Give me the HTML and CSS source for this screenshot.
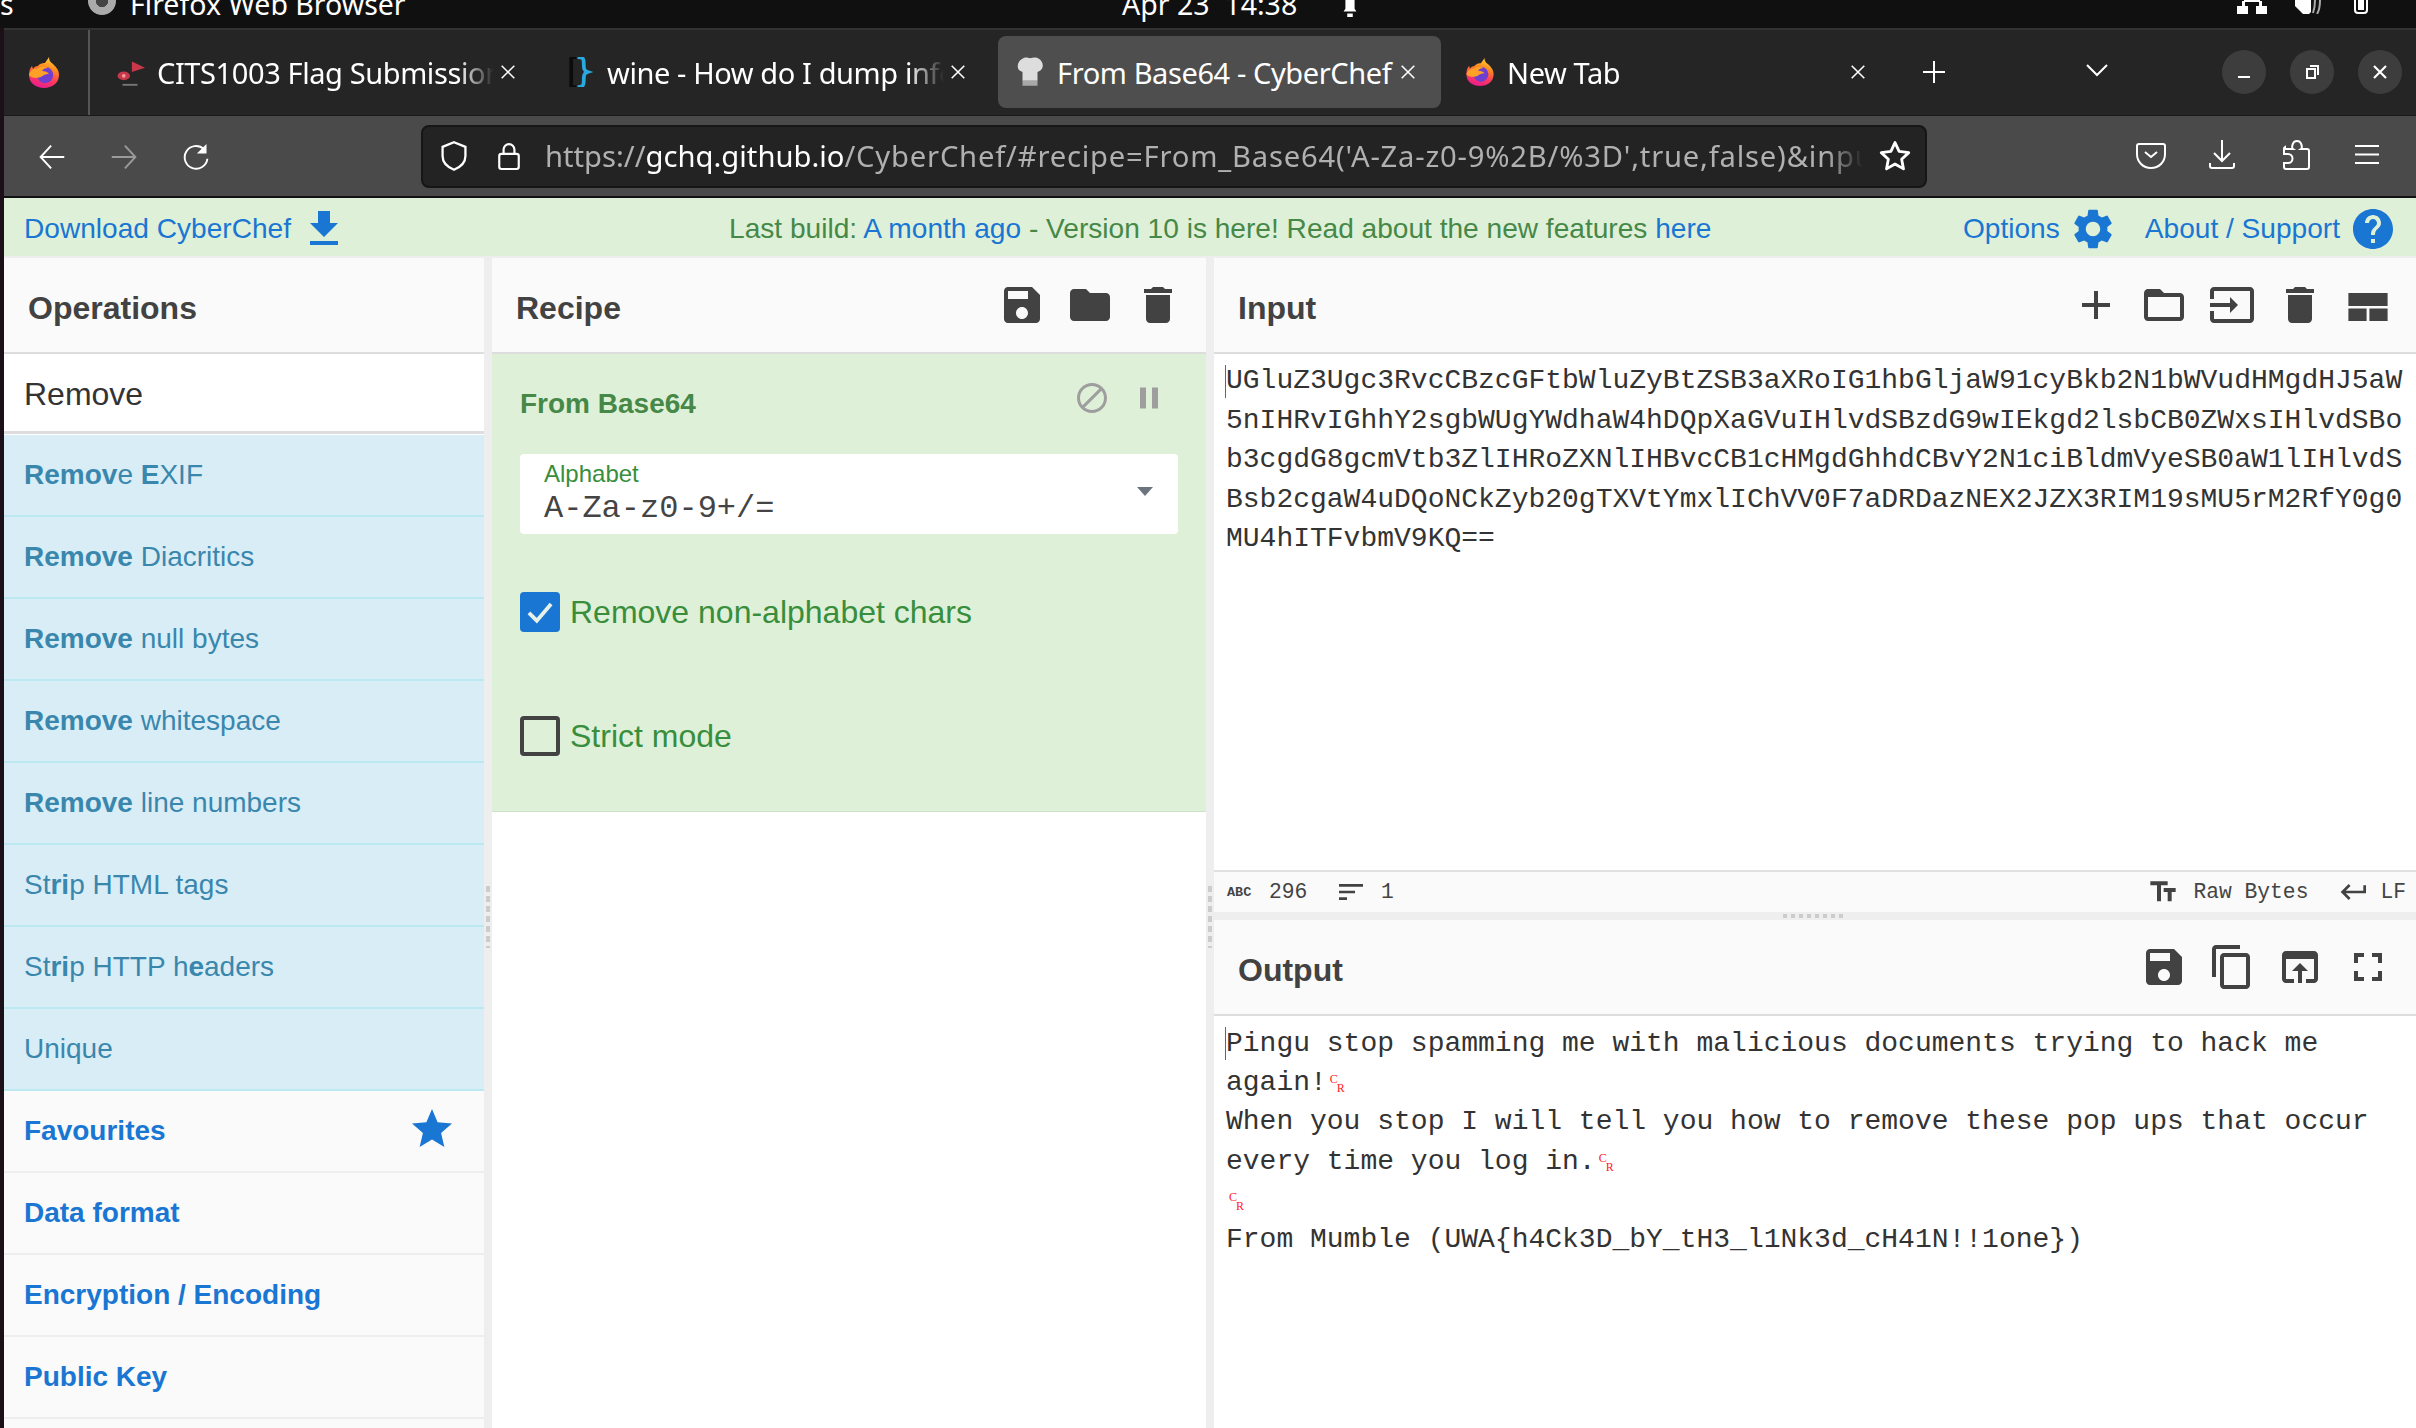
FILE: index.html
```html
<!DOCTYPE html>
<html lang="en">
<head>
<meta charset="utf-8">
<title>From Base64 - CyberChef</title>
<link rel="stylesheet" href="styles.css">
</head>
<body>
<svg class="sprite" xmlns="http://www.w3.org/2000/svg">
  <defs>
    <linearGradient id="fox-body" x1="0.700" y1="0" x2="0.400" y2="1">
      <stop offset="0" stop-color="#ffd43a"/>
      <stop offset="0.350" stop-color="#ff8a1e"/>
      <stop offset="0.700" stop-color="#ff3a5e"/>
      <stop offset="1" stop-color="#e81c8f"/>
    </linearGradient>
    <symbol id="i-save" viewBox="0 0 24 24"><path d="M17 3H5c-1.11 0-2 .9-2 2v14c0 1.1.89 2 2 2h14c1.1 0 2-.9 2-2V7l-4-4zm-5 16c-1.66 0-3-1.34-3-3s1.34-3 3-3 3 1.34 3 3-1.34 3-3 3zm3-10H5V5h10v4z"/></symbol>
    <symbol id="i-folder" viewBox="0 0 24 24"><path d="M10 4H4c-1.1 0-1.99.9-1.99 2L2 18c0 1.1.9 2 2 2h16c1.1 0 2-.9 2-2V8c0-1.1-.9-2-2-2h-8l-2-2z"/></symbol>
    <symbol id="i-folder-o" viewBox="0 0 24 24"><path d="M20 6h-8l-2-2H4c-1.1 0-1.99.9-1.99 2L2 18c0 1.1.9 2 2 2h16c1.1 0 2-.9 2-2V8c0-1.1-.9-2-2-2zm0 12H4V8h16v10z"/></symbol>
    <symbol id="i-trash" viewBox="0 0 24 24"><path d="M6 19c0 1.1.9 2 2 2h8c1.1 0 2-.9 2-2V7H6v12zM19 4h-3.5l-1-1h-5l-1 1H5v2h14V4z"/></symbol>
    <symbol id="i-add" viewBox="0 0 24 24"><path d="M19 13h-6v6h-2v-6H5v-2h6V5h2v6h6v2z"/></symbol>
    <symbol id="i-input" viewBox="0 0 24 24"><path d="M21 3.01H3c-1.1 0-2 .9-2 2V9h2V4.99h18v14.03H3V15H1v4.01c0 1.1.9 1.98 2 1.98h18c1.1 0 2-.88 2-1.98v-14c0-1.11-.9-2-2-2zM11 16l4-4-4-4v3H1v2h10v3z"/></symbol>
    <symbol id="i-layout" viewBox="0 0 24 24"><path d="M2.200 6h19.600v6.500H2.200zM2.200 13.800h9.100V20H2.200zM12.700 13.800h9.100V20h-9.100z"/></symbol>
    <symbol id="i-copy" viewBox="0 0 24 24"><path d="M16 1H4c-1.1 0-2 .9-2 2v14h2V3h12V1zm3 4H8c-1.1 0-2 .9-2 2v14c0 1.1.9 2 2 2h11c1.1 0 2-.9 2-2V7c0-1.1-.9-2-2-2zm0 16H8V7h11v14z"/></symbol>
    <symbol id="i-open" viewBox="0 0 24 24"><path d="M19 4H5c-1.11 0-2 .9-2 2v12c0 1.1.89 2 2 2h4v-2H5V8h14v10h-4v2h4c1.1 0 2-.9 2-2V6c0-1.1-.89-2-2-2zm-7 6l-4 4h3v6h2v-6h3l-4-4z"/></symbol>
    <symbol id="i-full" viewBox="0 0 24 24"><path d="M7 14H5v5h5v-2H7v-3zm-2-4h2V7h3V5H5v5zm12 7h-3v2h5v-5h-2v3zM14 5v2h3v3h2V5h-5z"/></symbol>
    <symbol id="i-down" viewBox="0 0 24 24"><path d="M19 9h-4V3H9v6H5l7 7 7-7zM5 18v2h14v-2H5z"/></symbol>
    <symbol id="i-gear" viewBox="0 0 24 24"><path d="M19.14 12.94c.04-.3.06-.61.06-.94 0-.32-.02-.64-.07-.94l2.03-1.58c.18-.14.23-.41.12-.61l-1.92-3.32c-.12-.22-.37-.29-.59-.22l-2.39.96c-.5-.38-1.03-.7-1.62-.94l-.36-2.54c-.04-.24-.24-.41-.48-.41h-3.84c-.24 0-.43.17-.47.41l-.36 2.54c-.59.24-1.13.57-1.62.94l-2.39-.96c-.22-.08-.47 0-.59.22L2.74 8.87c-.12.21-.08.47.12.61l2.03 1.58c-.05.3-.09.63-.09.94s.02.64.07.94l-2.03 1.58c-.18.14-.23.41-.12.61l1.92 3.32c.12.22.37.29.59.22l2.39-.96c.5.38 1.03.7 1.62.94l.36 2.54c.05.24.24.41.48.41h3.84c.24 0 .44-.17.47-.41l.36-2.54c.59-.24 1.13-.56 1.62-.94l2.39.96c.22.08.47 0 .59-.22l1.92-3.32c.12-.22.07-.47-.12-.61l-2.01-1.58zM12 15.6c-1.98 0-3.6-1.62-3.6-3.6s1.62-3.6 3.6-3.6 3.6 1.62 3.6 3.6-1.62 3.6-3.6 3.6z"/></symbol>
    <symbol id="i-help" viewBox="0 0 24 24"><path d="M12 2C6.48 2 2 6.48 2 12s4.48 10 10 10 10-4.48 10-10S17.52 2 12 2zm1 17h-2v-2h2v2zm2.07-7.75l-.9.92C13.45 12.9 13 13.5 13 15h-2v-.5c0-1.1.45-2.1 1.17-2.83l1.24-1.26c.37-.36.59-.86.59-1.41 0-1.1-.9-2-2-2s-2 .9-2 2H8c0-2.21 1.79-4 4-4s4 1.79 4 4c0 .88-.36 1.68-.93 2.25z"/></symbol>
    <symbol id="i-star" viewBox="0 0 24 24"><path d="M12 17.27L18.18 21l-1.64-7.03L22 9.24l-7.19-.61L12 2 9.19 8.63 2 9.24l5.46 4.73L5.82 21z"/></symbol>
    <symbol id="i-block" viewBox="0 0 24 24"><path d="M12 2C6.48 2 2 6.48 2 12s4.48 10 10 10 10-4.48 10-10S17.52 2 12 2zM4 12c0-4.42 3.58-8 8-8 1.85 0 3.55.63 4.9 1.69L5.69 16.9C4.63 15.55 4 13.85 4 12zm8 8c-1.85 0-3.55-.63-4.9-1.69L18.31 7.1C19.37 8.45 20 10.15 20 12c0 4.42-3.58 8-8 8z"/></symbol>
    <symbol id="i-pause" viewBox="0 0 24 24"><path d="M6 19h4V5H6v14zm8-14v14h4V5h-4z"/></symbol>
    <symbol id="i-tt" viewBox="0 0 24 24"><path d="M2.5 4v3h5v12h3V7h5V4h-13zm19 5h-9v3h3v7h3v-7h3V9z"/></symbol>
    <symbol id="i-ret" viewBox="0 0 24 24"><path d="M19 7v4H5.83l3.58-3.59L8 6l-6 6 6 6 1.41-1.41L5.83 13H21V7z"/></symbol>
    <symbol id="i-sort" viewBox="0 0 24 24"><path d="M3 18h6v-2H3v2zM3 6v2h18V6H3zm0 7h12v-2H3v2z"/></symbol>
    <symbol id="i-x" viewBox="0 0 20 20"><path fill="none" stroke="#fff" stroke-width="1.700" d="M3 3l14 14M17 3L3 17"/></symbol>
    <symbol id="i-fox" viewBox="0 0 32 33">
      <path fill="url(#fox-body)" d="M21 1c0 3 1 5 4 7 3 3 6 6 6 11 0 8-7 13-15 13S1 27 1 19c0-4 1-7 3-9l1 3c1-2 3-3 5-3 2-3 6-3 7-3 1-2 3-4 4-6z"/>
      <circle cx="17" cy="19" r="8.200" fill="#6f3fd0"/>
      <path fill="#ffa126" d="M1 19c1-4 4-7 8-6 3-3 8-3 11-1-3 0-5 1-6 3 3 0 6 1 7 3-4 0-5 1-8 3-3 1-9 2-12-2z"/>
    </symbol>
  </defs>
</svg>

<header class="topbar">
  <span class="top-s">s</span>
  <span class="top-app-icon"></span>
  <span class="top-app">Firefox Web Browser</span>
  <span class="top-clock">Apr 23&nbsp;&nbsp;14:38</span>
  <svg class="top-bell" viewBox="0 0 24 24"><path fill="#fff" d="M12 -2c-3 0-5 2-5 6v10l-2 3h14l-2-3V4c0-4-2-6-5-6zM9 19h6v4H9z"/></svg>
  <span class="top-tray">
    <svg class="tray-net" viewBox="0 0 32 14"><path fill="#fff" d="M8 0h16v2H8zM6 1h3v5H6zM23 1h3v5h-3zM1 6h11v8H1zM20 6h11v8H20z"/></svg>
    <svg class="tray-vol" viewBox="0 0 28 14"><path fill="#fff" d="M0 0h16v12l-2 2H8L0 6z"/><path fill="none" stroke="#aaa" stroke-width="2" d="M20 0c0 6-1 10-2 13M25 0c0 6-1 11-3 14"/></svg>
    <svg class="tray-bat" viewBox="0 0 14 14"><path fill="none" stroke="#fff" stroke-width="2" d="M1 0v10a3 3 0 0 0 3 3h6a3 3 0 0 0 3-3V0"/><path fill="#fff" d="M4 0h6v10H4z"/></svg>
  </span>
</header>

<div class="window">
  <nav class="tabs">
    <div class="tab-logo"><svg class="fox"><use href="#i-fox"/></svg></div>
    <div class="tab">
      <svg class="favicon" viewBox="0 0 24 24"><path fill="#c8384a" d="M13.500 3.500L24 8.500 13.500 12z"/><ellipse cx="7" cy="15" rx="5" ry="3.500" fill="#c8384a"/><circle cx="7" cy="15" r="1.500" fill="#ee9aa0"/><path fill="#777" d="M6 21.500h12v1.500H6z"/></svg>
      <span class="tab-title">CITS1003 Flag Submission</span>
      <svg class="tab-close"><use href="#i-x"/></svg>
    </div>
    <div class="tab">
      <svg class="favicon" viewBox="0 0 24 24"><path fill="none" stroke="#0c0c0c" stroke-width="3" d="M9 0H5v24h4"/><path fill="none" stroke="#2aa8e0" stroke-width="3" d="M10 0c5 0 5 2 5 5 0 4 0 6 3 7-3 1-3 3-3 7 0 3 0 5-5 5"/></svg>
      <span class="tab-title">wine - How do I dump info</span>
      <svg class="tab-close"><use href="#i-x"/></svg>
    </div>
    <div class="tab tab-active">
      <svg class="favicon favicon-hat" viewBox="0 0 24 24"><path fill="#ddd" d="M5 2c2-2 5-2 7-1 3-1 6-1 8 1 3 3 3 7 0 9l-2 1v7H6v-7l-2-1C1 9 2 4 5 2z"/><path fill="#a8a8a8" d="M6 19h12v4H6z"/></svg>
      <span class="tab-title">From Base64 - CyberChef</span>
      <svg class="tab-close"><use href="#i-x"/></svg>
    </div>
    <div class="tab">
      <svg class="favicon"><use href="#i-fox"/></svg>
      <span class="tab-title">New Tab</span>
      <svg class="tab-close"><use href="#i-x"/></svg>
    </div>
    <svg class="tab-new" viewBox="0 0 24 24"><path fill="none" stroke="#fff" stroke-width="2" d="M12 1v22M1 12h22"/></svg>
    <svg class="tab-list" viewBox="0 0 24 24"><path fill="none" stroke="#fff" stroke-width="2" d="M2 7l10 10L22 7"/></svg>
    <div class="winbtns">
      <span class="winbtn"><svg viewBox="0 0 24 24"><path fill="#fff" d="M6 16h12v2H6z"/></svg></span>
      <span class="winbtn"><svg viewBox="0 0 24 24"><path fill="none" stroke="#fff" stroke-width="2" d="M7 9h8v9H7zM10 6h8v9"/></svg></span>
      <span class="winbtn"><svg viewBox="0 0 24 24"><path fill="none" stroke="#fff" stroke-width="2.200" d="M6 6l12 12M18 6L6 18"/></svg></span>
    </div>
  </nav>

  <div class="toolbar">
    <div class="nav-icons">
      <svg class="nav-icon" viewBox="0 0 32 32"><path fill="none" stroke="#fff" stroke-width="2.200" d="M30 16H3M15 3L3 16l12 13"/></svg>
      <svg class="nav-icon nav-off" viewBox="0 0 32 32"><path fill="none" stroke="#9a9a9a" stroke-width="2.200" d="M2 16h27M17 3l12 13-12 13"/></svg>
      <svg class="nav-icon" viewBox="0 0 32 32"><path fill="none" stroke="#fff" stroke-width="2.200" d="M25 7a13 13 0 1 0 4 11"/><path fill="#fff" d="M28 1v11H17z"/></svg>
    </div>
    <div class="urlbar">
      <svg class="url-shield" viewBox="0 0 24 28"><path fill="none" stroke="#fff" stroke-width="2" d="M12 2l10 4v8c0 6-5 10-10 12C7 24 2 20 2 14V6z"/></svg>
      <svg class="url-lock" viewBox="0 0 24 28"><path fill="none" stroke="#fff" stroke-width="2" d="M5 12h14a2 2 0 0 1 2 2v10a2 2 0 0 1-2 2H5a2 2 0 0 1-2-2V14a2 2 0 0 1 2-2zM7 12V8a5 5 0 0 1 10 0v4"/></svg>
      <span class="url-text">https://<b class="url-host">gchq.github.io</b><span class="url-rest">/CyberChef/#recipe=From_Base64('A-Za-z0-9%2B/%3D',true,false)&amp;input=UGluZ3Ug</span></span>
      <svg class="url-star" viewBox="0 0 24 24"><path fill="none" stroke="#fff" stroke-width="2" stroke-linejoin="round" d="M12 2.500l2.900 6.300 6.800.8-5 4.700 1.300 6.800-6-3.400-6 3.400 1.300-6.800-5-4.700 6.800-.8z"/></svg>
    </div>
    <div class="tool-icons">
      <svg class="tool-icon" viewBox="0 0 32 34"><path fill="none" stroke="#fff" stroke-width="2" d="M4 5h24a2 2 0 0 1 2 2v8c0 8-6 14-14 14S2 23 2 15V7a2 2 0 0 1 2-2z"/><path fill="none" stroke="#fff" stroke-width="2" d="M10 13l6 5 6-5"/></svg>
      <svg class="tool-icon" viewBox="0 0 32 34"><path fill="none" stroke="#fff" stroke-width="2" d="M15 1v21M7 14l8 8 8-8M3 24v3a2 2 0 0 0 2 2h20a2 2 0 0 0 2-2v-3"/></svg>
      <svg class="tool-icon" viewBox="0 0 32 34"><path fill="none" stroke="#fff" stroke-width="2" d="M6 10h8c-1.500-1-1-8 4-8s5.500 7 4 8h6a2 2 0 0 1 2 2v16a2 2 0 0 1-2 2H7a2 2 0 0 1-2-2v-4h4a4 4 0 0 0 0-9H5v-5a2 2 0 0 1 1-2z"/></svg>
      <svg class="tool-icon" viewBox="0 0 32 34"><path fill="none" stroke="#fff" stroke-width="2" d="M4 7h24M4 15.500h24M4 24h24"/></svg>
    </div>
  </div>

  <div class="banner">
    <div class="banner-side">
      <a class="blue">Download CyberChef</a>
      <svg class="ic48 ic-blue"><use href="#i-down"/></svg>
    </div>
    <div class="banner-msg">Last build: <span class="blue">A month ago</span> - Version 10 is here! Read about the new features <span class="blue">here</span></div>
    <div class="banner-side banner-right">
      <a class="blue">Options</a>
      <svg class="ic48 ic-blue"><use href="#i-gear"/></svg>
      <a class="blue about">About / Support</a>
      <svg class="ic48 ic-blue"><use href="#i-help"/></svg>
    </div>
  </div>

  <main class="workspace">
    <section class="panel ops">
      <h2 class="panel-head">Operations</h2>
      <div class="search">Remove</div>
      <ul class="oplist">
        <li class="op"><span><b>Remov</b>e <b>E</b>XIF</span></li>
        <li class="op"><span><b>Remove</b> Diacritics</span></li>
        <li class="op"><span><b>Remove</b> null bytes</span></li>
        <li class="op"><span><b>Remove</b> whitespace</span></li>
        <li class="op"><span><b>Remove</b> line numbers</span></li>
        <li class="op"><span>St<b>ri</b>p HTML tags</span></li>
        <li class="op"><span>St<b>ri</b>p HTTP h<b>e</b>aders</span></li>
        <li class="op"><span>Unique</span></li>
        <li class="cat">Favourites<svg class="ic48 ic-blue"><use href="#i-star"/></svg></li>
        <li class="cat">Data format</li>
        <li class="cat">Encryption / Encoding</li>
        <li class="cat">Public Key</li>
      </ul>
    </section>

    <div class="gutter"><span class="grip-v"></span></div>

    <section class="panel recipe">
      <div class="panel-head">
        <h2 class="head-title">Recipe</h2>
        <div class="head-icons">
          <span class="hbtn"><svg class="ic48"><use href="#i-save"/></svg></span>
          <span class="hbtn"><svg class="ic48"><use href="#i-folder"/></svg></span>
          <span class="hbtn"><svg class="ic48"><use href="#i-trash"/></svg></span>
        </div>
      </div>
      <div class="step">
        <div class="step-head">
          <span class="step-title">From Base64</span>
          <span class="step-icons">
            <svg class="ic36"><use href="#i-block"/></svg>
            <svg class="ic36"><use href="#i-pause"/></svg>
          </span>
        </div>
        <div class="field">
          <label class="field-label">Alphabet</label>
          <div class="field-value">A-Za-z0-9+/=</div>
          <span class="field-caret"></span>
        </div>
        <div class="check check-on">
          <span class="box box-on"><svg viewBox="0 0 24 24"><path fill="none" stroke="#e8f0ea" stroke-width="2.400" d="M5 12.500l5 5L19 7"/></svg></span>
          Remove non-alphabet chars
        </div>
        <div class="check check-off">
          <span class="box"></span>
          Strict mode
        </div>
      </div>
    </section>

    <div class="gutter"><span class="grip-v"></span></div>

    <section class="panel io">
      <div class="panel-head">
        <h2 class="head-title">Input</h2>
        <div class="head-icons">
          <span class="hbtn"><svg class="ic48"><use href="#i-add"/></svg></span>
          <span class="hbtn"><svg class="ic48"><use href="#i-folder-o"/></svg></span>
          <span class="hbtn"><svg class="ic48"><use href="#i-input"/></svg></span>
          <span class="hbtn"><svg class="ic48"><use href="#i-trash"/></svg></span>
          <span class="hbtn"><svg class="ic48"><use href="#i-layout"/></svg></span>
        </div>
      </div>
      <div class="editor editor-in"><span class="caret"></span>UGluZ3Ugc3RvcCBzcGFtbWluZyBtZSB3aXRoIG1hbGljaW91cyBkb2N1bWVudHMgdHJ5aW
5nIHRvIGhhY2sgbWUgYWdhaW4hDQpXaGVuIHlvdSBzdG9wIEkgd2lsbCB0ZWxsIHlvdSBo
b3cgdG8gcmVtb3ZlIHRoZXNlIHBvcCB1cHMgdGhhdCBvY2N1ciBldmVyeSB0aW1lIHlvdS
Bsb2cgaW4uDQoNCkZyb20gTXVtYmxlIChVV0F7aDRDazNEX2JZX3RIM19sMU5rM2RfY0g0
MU4hITFvbmV9KQ==</div>
      <div class="status">
        <span class="abc">ABC</span><span class="st-num">296</span>
        <svg class="ic32"><use href="#i-sort"/></svg><span class="st-one">1</span>
        <span class="st-right">
          <svg class="ic32"><use href="#i-tt"/></svg><span>Raw Bytes</span>
          <svg class="ic32 st-ret"><use href="#i-ret"/></svg><span>LF</span>
        </span>
      </div>
      <div class="gutter-h"><span class="grip-h"></span></div>
      <div class="panel-head">
        <h2 class="head-title">Output</h2>
        <div class="head-icons">
          <span class="hbtn"><svg class="ic48"><use href="#i-save"/></svg></span>
          <span class="hbtn"><svg class="ic48"><use href="#i-copy"/></svg></span>
          <span class="hbtn"><svg class="ic48"><use href="#i-open"/></svg></span>
          <span class="hbtn"><svg class="ic48"><use href="#i-full"/></svg></span>
        </div>
      </div>
      <div class="editor editor-out"><span class="caret"></span>Pingu stop spamming me with malicious documents trying to hack me
again!<span class="cr"><i>C</i><i>R</i></span>
When you stop I will tell you how to remove these pop ups that occur
every time you log in.<span class="cr"><i>C</i><i>R</i></span>
<span class="cr"><i>C</i><i>R</i></span>
From Mumble (UWA{h4Ck3D_bY_tH3_l1Nk3d_cH41N!!1one})</div>
    </section>
  </main>
</div>
</body>
</html>
```

FILE: styles.css
```css
* { box-sizing: border-box; }
html, body { margin: 0; padding: 0; height: 1428px; overflow: hidden; }
body { background: #1b1018; font-family: "Liberation Sans", Arial, sans-serif; color: #424242; }
h2, ul { margin: 0; padding: 0; }
ul { list-style: none; }
svg { display: block; flex: none; }
.sprite { width: 0; height: 0; position: absolute; }

.topbar { height: 28px; background: #101010; color: #fff; display: flex; align-items: flex-end; overflow: hidden; font-family: "Noto Sans", sans-serif; font-size: 28.500px; line-height: 38px; }
.top-s { margin-bottom: 5px; width: 88px; flex: none; }
.top-app-icon { width: 28px; height: 28px; border-radius: 50%; background: radial-gradient(circle at 50% 50%, #444 0 30%, #aaa 32% 70%, #777 72%); margin-bottom: 13px; flex: none; }
.top-app { margin: 0 0 5px 14px; width: 992px; white-space: nowrap; flex: none; }
.top-clock { width: 217px; white-space: nowrap; margin-bottom: 5px; flex: none; }
.top-bell { width: 22px; height: 22px; margin-bottom: 10px; }
.top-tray { margin-left: auto; display: flex; align-items: flex-end; margin-right: 48px; }
.tray-net { width: 32px; height: 14px; margin-bottom: 14px; }
.tray-vol { width: 30px; height: 14px; margin: 0 0 14px 26px; }
.tray-bat { width: 14px; height: 14px; margin: 0 0 14px 30px; }

.window { margin-left: 4px; height: 1400px; display: flex; flex-direction: column; overflow: hidden; }

.tabs { height: 88px; flex: none; background: #252525; border-top: 2px solid #333; border-bottom: 1px solid #1a1a1a; display: flex; align-items: flex-start; font-family: "Noto Sans", sans-serif; color: #fff; }
.tab-logo { width: 86px; height: 85px; border-right: 2px solid #555; display: flex; align-items: center; justify-content: flex-start; padding-left: 24px; margin-right: 8px; flex: none; }
.fox { width: 32px; height: 33px; }
.tab { width: 443px; height: 72px; margin: 6px 7px 0 0; border-radius: 8px; display: flex; align-items: center; padding-left: 17px; flex: none; }
.tab-active { background: #4e4e4e; }
.favicon { width: 30px; height: 30px; flex: none; }
.tab-title { width: 337px; margin-left: 12px; white-space: nowrap; overflow: hidden; font-size: 29px; letter-spacing: -0.4px; -webkit-mask-image: linear-gradient(to left, transparent 0, #000 36px); mask-image: linear-gradient(to left, transparent 0, #000 36px); }
.tab-active .tab-title { -webkit-mask-image: none; mask-image: none; }
.tab-close { width: 18px; height: 18px; margin-left: 5px; }
.tab-new { width: 24px; height: 24px; margin: 30px 0 0 24px; }
.tab-list { width: 24px; height: 24px; margin: 28px 0 0 139px; }
.winbtns { display: flex; gap: 24px; margin: 20px 0 0 113px; }
.winbtn { width: 44px; height: 44px; border-radius: 50%; background: #3d3d3d; display: flex; align-items: center; justify-content: center; }
.winbtn svg { width: 24px; height: 24px; }

.toolbar { height: 82px; flex: none; background: #4a4a4a; border-bottom: 2px solid #111; display: flex; align-items: center; }
.nav-icons { display: flex; gap: 44px; width: 417px; padding: 2px 0 0 34px; align-items: center; flex: none; }
.nav-icon { width: 28px; height: 32px; }
.urlbar { width: 1506px; height: 63px; background: #232323; border: 2px solid #161616; border-radius: 8px; display: flex; align-items: center; padding-left: 17px; flex: none; }
.url-shield { width: 28px; height: 32px; }
.url-lock { width: 26px; height: 32px; margin-left: 28px; }
.url-text { width: 1318px; margin-left: 23px; white-space: nowrap; overflow: hidden; font-family: "Noto Sans", sans-serif; font-size: 29.200px; color: #b0b0b0; -webkit-mask-image: linear-gradient(to left, transparent 0, #000 36px); mask-image: linear-gradient(to left, transparent 0, #000 36px); }
.url-host { font-weight: 400; color: #fff; }
.url-rest { letter-spacing: 0.8px; }
.url-star { width: 34px; height: 34px; margin-left: 15px; }
.tool-icons { display: flex; gap: 40px; margin-left: 208px; }
.tool-icon { width: 32px; height: 34px; }

.banner { height: 60px; flex: none; background: #dff0d8; border-bottom: 2px solid #eee; padding-top: 3px; display: flex; align-items: center; font-size: 28.100px; color: #468847; }
.blue { color: #1976d2; }
.banner-side { display: flex; align-items: center; flex: none; }
.banner-side > a:first-child { margin-left: 20px; }
.banner-side .ic48 { margin-left: 9px; }
.banner-msg { margin-left: 381px; white-space: nowrap; }
.banner-right { margin-left: auto; margin-right: 19px; }
.banner-side .about { margin-left: 28px; }
.ic48 { width: 48px; height: 48px; fill: #424242; }
.ic36 { width: 36px; height: 36px; fill: #9e9e9e; }
.ic32 { width: 32px; height: 32px; fill: #424242; }
.banner-side .ic-blue, .cat .ic-blue { fill: #1976d2; }

.workspace { flex: 1; min-height: 0; background: #fff; display: grid; grid-template-columns: 480px 8px 714px 8px 1fr; }
.gutter { background: #eee; display: flex; align-items: flex-start; justify-content: center; }
.grip-v { width: 4px; height: 62px; margin-top: 628px; background: repeating-linear-gradient(to bottom, #ccc 0 6px, transparent 6px 10px); }
.panel { background: #fff; overflow: hidden; display: flex; flex-direction: column; min-width: 0; }

.panel-head { height: 96px; flex: none; background: #fafafa; border-bottom: 2px solid #ddd; padding: 6px 0 0 24px; display: flex; align-items: center; justify-content: space-between; font-size: 32px; font-weight: 700; color: #424242; }
.head-title { font-size: 32px; font-weight: 700; }
.head-icons { display: flex; margin: -6px 14px 0 0; }
.hbtn { width: 68px; height: 48px; display: flex; justify-content: center; }

.search { height: 80px; flex: none; background: #fff; border-bottom: 3px solid #ddd; margin-bottom: 1px; padding: 3px 0 0 20px; display: flex; align-items: center; font-size: 32px; color: #333; }
.oplist { flex: 1; background: #fafafa; }
.op, .cat { height: 82px; display: flex; align-items: center; padding-left: 20px; font-size: 28px; }
.op { background: #d9edf7; border-bottom: 2px solid #bce8f1; color: #3a87ad; }
.cat { background: #fafafa; border-bottom: 2px solid #eee; color: #1976d2; font-weight: 700; justify-content: space-between; padding-right: 28px; }
.cat svg { margin-top: -4px; }

.step { height: 458px; flex: none; background: #dff0d8; border-bottom: 1px solid #cfdfc8; padding: 0 28px; color: #388e3c; }
.step-head { height: 100px; display: flex; align-items: center; justify-content: space-between; }
.step-title { font-size: 28px; font-weight: 700; color: #468847; }
.step-icons { display: flex; gap: 21px; margin: -12px 11px 0 0; }
.field { height: 80px; background: #fff; border-radius: 4px; padding: 6px 24px 0; position: relative; }
.field-label { display: block; font-size: 24px; line-height: 28px; color: #388e3c; }
.field-value { font-family: "Liberation Mono", monospace; font-size: 32px; line-height: 36px; margin-top: 3px; color: #444; }
.field-caret { position: absolute; right: 25px; top: 33px; width: 0; height: 0; border: 8px solid transparent; border-top: 9px solid #6c757d; border-bottom: 0; }
.check { display: flex; align-items: center; gap: 10px; height: 40px; font-size: 32px; white-space: nowrap; }
.check-on { margin-top: 58px; }
.check-off { margin-top: 84px; }
.box { width: 40px; height: 40px; border: 4px solid #424242; border-radius: 4px; flex: none; }
.box-on { background: #1976d2; border: 0; padding: 1px; }

.editor { font-family: "Liberation Mono", monospace; font-size: 28px; color: #333; white-space: pre; padding-left: 12px; position: relative; flex: none; background: #fff; }
.editor-in { height: 516px; padding-top: 7px; line-height: 39.500px; }
.editor-out { flex: 1; padding-top: 8px; line-height: 39.200px; }
.caret { position: absolute; left: 11px; top: 11px; width: 1px; height: 33px; background: #666; }
.cr { display: inline-flex; flex-direction: column; width: 15px; height: 17px; margin-left: 3px; vertical-align: 7px; color: #f22; font-family: "Liberation Serif", serif; font-size: 12px; line-height: 9px; }
.cr i { font-style: normal; }
.cr i + i { align-self: flex-end; }
.status { height: 42px; flex: none; background: #fafafa; border-top: 2px solid #e0e0e0; display: flex; align-items: center; padding-left: 13px; font-family: "Liberation Mono", monospace; font-size: 21.300px; color: #444; white-space: pre; }
.abc { font-size: 13.500px; font-weight: 700; width: 42px; }
.st-num { width: 66px; }
.st-one { margin-left: 14px; }
.st-right { margin-left: auto; margin-right: 10px; display: flex; align-items: center; }
.st-right span:first-of-type { margin-left: 14px; }
.st-ret { margin: 0 10px 0 30px; }
.gutter-h { height: 8px; flex: none; background: #eee; display: flex; justify-content: center; align-items: center; }
.grip-h { width: 62px; height: 4px; margin-left: -2px; background: repeating-linear-gradient(to right, #ccc 0 4px, transparent 4px 8px); }
```
